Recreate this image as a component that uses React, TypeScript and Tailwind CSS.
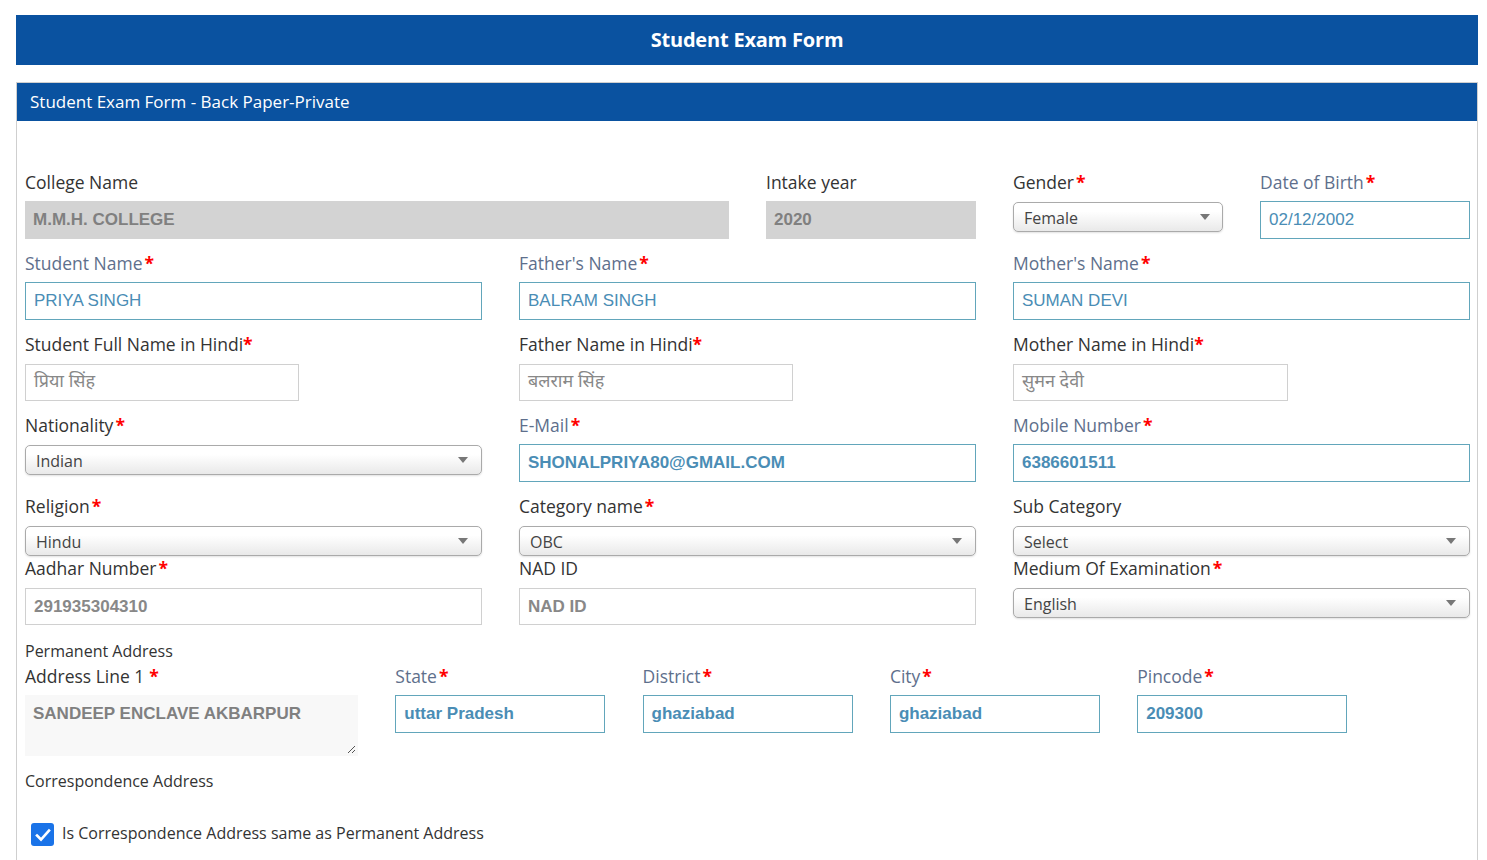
import React from 'react';

const sans = "font-['Open_Sans',sans-serif]";
const arial = "font-['Liberation_Sans',Arial,sans-serif]";
const hindi = "font-['Noto_Sans_Devanagari','Lohit_Devanagari','Noto_Sans','Noto_Serif_Devanagari',sans-serif]";

function Label({ text, req, blue, gap }: { text: string; req?: boolean; blue?: boolean; gap?: string }) {
  return (
    <div className={`h-[24px] leading-[24px] text-[17.5px] whitespace-nowrap ${blue ? 'text-[#5e6f8c]' : 'text-[#333]'}`}>
      {text}
      {req && <span className={`text-[#ff0000] font-bold ${gap ?? 'ml-[2px]'}`}>*</span>}
    </div>
  );
}

function Filled({ value, bold, w }: { value: string; bold?: boolean; w?: string }) {
  return (
    <div
      className={`mt-[7px] mb-[12px] h-[38px] border border-[#62a6bb] bg-white px-[8px] flex items-center text-[17px] text-[#4a8db5] ${arial} ${bold ? 'font-bold' : ''} ${w ?? ''}`}
    >
      {value}
    </div>
  );
}

function Plain({ value, bold, w, devanagari }: { value: string; bold?: boolean; w?: string; devanagari?: boolean }) {
  return (
    <div
      className={`mt-[8px] mb-[12px] h-[37px] border border-[#d0d0d0] bg-white px-[8px] flex items-center text-[#888] ${devanagari ? `${hindi} text-[18px]` : `${arial} text-[17px]`} ${bold ? 'font-bold' : ''} ${w ?? ''}`}
    >
      {value}
    </div>
  );
}

function Disabled({ value }: { value: string }) {
  return (
    <div className={`mt-[7px] mb-[12px] h-[38px] bg-[#d3d3d3] px-[8px] flex items-center text-[17px] text-[#808080] font-bold ${arial}`}>
      {value}
    </div>
  );
}

function Select({ value, narrow }: { value: string; narrow?: boolean }) {
  return (
    <div
      className={`mt-[8px] h-[30px] rounded-[5px] border border-[#aaa] bg-gradient-to-b from-white from-30% to-[#e9e9e9] shadow-[0_1px_2px_rgba(0,0,0,0.12)] flex items-center justify-between ${narrow ? 'pl-[10px] pr-[12px]' : 'pl-[10px] pr-[13px]'} text-[16px] text-[#444]`}
    >
      <span className="pt-[2px]">{value}</span>
      <svg width="10" height="6" viewBox="0 0 10 6">
        <path d="M0 0 L10 0 L5 6 Z" fill="#777" />
      </svg>
    </div>
  );
}

export default function App() {
  return (
    <div className={`min-h-[900px] bg-white pl-[16px] pr-[9px] pt-[15px] ${sans}`}>
      <div className="h-[50px] bg-[#0a52a0] flex items-center justify-center text-white text-[20px] font-bold tracking-[-0.2px]">
        Student Exam Form
      </div>

      <div className="mt-[17px] border border-[#cfcfcf] border-b-0">
        <div className="h-[38px] bg-[#0a52a0] flex items-center px-[13px] text-white text-[17px]">
          Student Exam Form - Back Paper-Private
        </div>

        <div className="pl-[8px] pr-[7px] pt-[49px] pb-[40px]">
          {/* row 1 */}
          <div className="grid grid-cols-[704px_210px_210px_210px] gap-x-[37px] items-start">
            <div>
              <Label text="College Name" />
              <Disabled value="M.M.H. COLLEGE" />
            </div>
            <div>
              <Label text="Intake year" />
              <Disabled value="2020" />
            </div>
            <div>
              <Label text="Gender" req />
              <Select value="Female" narrow />
            </div>
            <div>
              <Label text="Date of Birth" req blue />
              <Filled value="02/12/2002" />
            </div>
          </div>

          {/* three-column rows */}
          <div className="grid grid-cols-[457px_457px_457px] gap-x-[37px] items-start">
            <div>
              <Label text="Student Name" req blue />
              <Filled value="PRIYA SINGH" />
            </div>
            <div>
              <Label text="Father's Name" req blue />
              <Filled value="BALRAM SINGH" />
            </div>
            <div>
              <Label text="Mother's Name" req blue />
              <Filled value="SUMAN DEVI" />
            </div>

            <div>
              <Label text="Student Full Name in Hindi" req gap="ml-0" />
              <Plain value="प्रिया सिंह" w="w-[274px]" devanagari />
            </div>
            <div>
              <Label text="Father Name in Hindi" req gap="ml-0" />
              <Plain value="बलराम सिंह" w="w-[274px]" devanagari />
            </div>
            <div>
              <Label text="Mother Name in Hindi" req gap="ml-0" />
              <Plain value="सुमन देवी" w="w-[275px]" devanagari />
            </div>

            <div>
              <Label text="Nationality" req />
              <Select value="Indian" />
            </div>
            <div>
              <Label text="E-Mail" req blue />
              <Filled value="SHONALPRIYA80@GMAIL.COM" bold />
            </div>
            <div>
              <Label text="Mobile Number" req blue />
              <Filled value="6386601511" bold />
            </div>

            <div>
              <Label text="Religion" req />
              <Select value="Hindu" />
            </div>
            <div>
              <Label text="Category name" req />
              <Select value="OBC" />
            </div>
            <div>
              <Label text="Sub Category" />
              <Select value="Select" />
            </div>

            <div>
              <Label text="Aadhar Number" req />
              <Plain value="291935304310" bold />
            </div>
            <div>
              <Label text="NAD ID" />
              <Plain value="NAD ID" bold />
            </div>
            <div>
              <Label text="Medium Of Examination" req />
              <Select value="English" />
            </div>
          </div>

          <div className="mt-[4px] h-[20px] leading-[20px] text-[16px] text-[#333]">Permanent Address</div>

          <div className="mt-[3px] grid grid-cols-[333px_210px_210px_210px_210px] gap-x-[37.3px] items-start">
            <div>
              <Label text="Address Line 1" req gap="ml-[5px]" />
              <div className={`relative mt-[7px] h-[61px] bg-[#f8f8f8] px-[8px] pt-[6px] text-[17px] font-bold text-[#808080] ${arial}`}>
                SANDEEP ENCLAVE AKBARPUR
                <svg className="absolute right-[2px] bottom-[2px]" width="10" height="10" viewBox="0 0 10 10">
                  <path d="M9 2 L2 9 M9 6 L6 9" stroke="#555" strokeWidth="1" />
                </svg>
              </div>
            </div>
            <div>
              <Label text="State" req blue />
              <Filled value="uttar Pradesh" bold />
            </div>
            <div>
              <Label text="District" req blue />
              <Filled value="ghaziabad" bold />
            </div>
            <div>
              <Label text="City" req blue />
              <Filled value="ghaziabad" bold />
            </div>
            <div>
              <Label text="Pincode" req blue />
              <Filled value="209300" bold />
            </div>
          </div>

          <div className="mt-[15px] h-[20px] leading-[20px] text-[16px] text-[#333]">Correspondence Address</div>

          <div className="mt-[32px] ml-[6px] flex items-center gap-[8px]">
            <span className="w-[23px] h-[23px] rounded-[3px] bg-[#1a73e8] flex items-center justify-center">
              <svg width="16" height="14" viewBox="0 0 16 14">
                <path d="M2 7.5 L6 11.5 L14 2.5" stroke="white" strokeWidth="2.6" fill="none" strokeLinecap="square" />
              </svg>
            </span>
            <span className="text-[16px] text-[#333] -mt-[3px]">Is Correspondence Address same as Permanent Address</span>
          </div>
        </div>
      </div>
    </div>
  );
}
